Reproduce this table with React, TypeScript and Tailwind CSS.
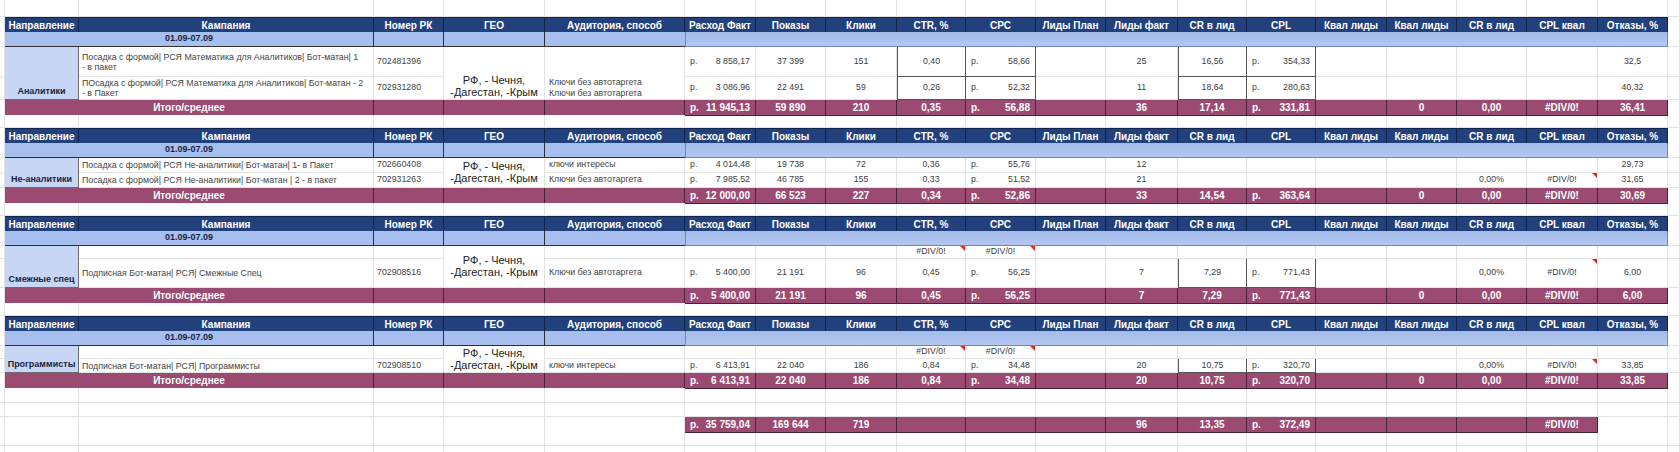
const GRID =
  "grid grid-cols-[5px_74px_295px_70px_101px_140px_71px_70px_71px_69px_70px_70px_72px_69px_69px_71px_70px_70px_71px_70px_12px]";
const LINE = "border-r border-b border-[#e2e2e2] bg-white";

const HEAD = [
  "Направление",
  "Кампания",
  "Номер РК",
  "ГЕО",
  "Аудитория, способ",
  "Расход Факт",
  "Показы",
  "Клики",
  "CTR, %",
  "CPC",
  "Лиды План",
  "Лиды факт",
  "CR в лид",
  "CPL",
  "Квал лиды",
  "Квал лиды",
  "CR в лид",
  "CPL квал",
  "Отказы, %",
];

// money columns inside the 14 metric values: Расход, CPC, CPL
const MONEY = [0, 4, 8];

type DRow = { camp: string[]; num: string; aud: string; vals: string[]; tri?: number[]; dark?: number[] };
type Block = {
  dir: string;
  rows: string;
  geo: string;
  audMerged?: boolean;
  data: DRow[];
  total: string[];
};

const BLOCKS: Block[] = [
  {
    dir: "Аналитики",
    rows: "grid-rows-[30px_23px]",
    geo: "justify-end",
    audMerged: true,
    data: [
      {
        camp: ["Посадка с формой| РСЯ Математика для Аналитиков| Бот-матан| 1", "- в пакет"],
        num: "702481396",
        aud: "Ключи без автотаргета",
        vals: ["8 858,17", "37 399", "151", "0,40", "58,66", "", "25", "16,56", "354,33", "", "", "", "", "32,5"],
        dark: [3, 4, 7, 8],
      },
      {
        camp: ["ПОсадка с формой| РСЯ Математика для Аналитиков| Бот-матан - 2", "- в Пакет"],
        num: "702931280",
        aud: "Ключи без автотаргета",
        vals: ["3 086,96", "22 491", "59", "0,26", "52,32", "", "11", "18,64", "280,63", "", "", "", "", "40,32"],
        dark: [3, 4, 7, 8],
      },
    ],
    total: ["11 945,13", "59 890", "210", "0,35", "56,88", "", "36", "17,14", "331,81", "", "0", "0,00", "#DIV/0!", "36,41"],
  },
  {
    dir: "Не-аналитики",
    rows: "grid-rows-[15px_15px]",
    geo: "justify-center",
    data: [
      {
        camp: ["Посадка с формой| РСЯ Не-аналитики| Бот-матан| 1- в Пакет"],
        num: "702660408",
        aud: "ключи интересы",
        vals: ["4 014,48", "19 738", "72", "0,36", "55,76", "", "12", "", "", "", "", "", "", "29,73"],
      },
      {
        camp: ["Посадка с формой| РСЯ Не-аналитики| Бот-матан | 2 - в пакет"],
        num: "702931263",
        aud: "Ключи без автотаргета",
        vals: ["7 985,52", "46 785", "155", "0,33", "51,52", "", "21", "", "", "", "", "0,00%", "#DIV/0!", "31,65"],
        tri: [12],
      },
    ],
    total: ["12 000,00", "66 523", "227", "0,34", "52,86", "", "33", "14,54", "363,64", "", "0", "0,00", "#DIV/0!", "30,69"],
  },
  {
    dir: "Смежные спец",
    rows: "grid-rows-[13px_29px]",
    geo: "justify-center",
    data: [
      {
        camp: [""],
        num: "",
        aud: "",
        vals: ["", "", "", "#DIV/0!", "#DIV/0!", "", "", "", "", "", "", "", "", ""],
        tri: [3, 4],
      },
      {
        camp: ["Подписная Бот-матан| РСЯ| Смежные Спец"],
        num: "702908516",
        aud: "Ключи без автотаргета",
        vals: ["5 400,00", "21 191", "96", "0,45", "56,25", "", "7", "7,29", "771,43", "", "", "0,00%", "#DIV/0!", "6,00"],
        tri: [12],
        dark: [7, 8],
      },
    ],
    total: ["5 400,00", "21 191", "96", "0,45", "56,25", "", "7", "7,29", "771,43", "", "0", "0,00", "#DIV/0!", "6,00"],
  },
  {
    dir: "Программисты",
    rows: "grid-rows-[13px_14px]",
    geo: "justify-end",
    data: [
      {
        camp: [""],
        num: "",
        aud: "",
        vals: ["", "", "", "#DIV/0!", "#DIV/0!", "", "", "", "", "", "", "", "", ""],
        tri: [3, 4],
      },
      {
        camp: ["Подписная Бот-матан| РСЯ| Программисты"],
        num: "702908510",
        aud: "ключи интересы",
        vals: ["6 413,91", "22 040", "186", "0,84", "34,48", "", "20", "10,75", "320,70", "", "", "0,00%", "#DIV/0!", "33,85"],
        tri: [12],
        dark: [7, 8],
      },
    ],
    total: ["6 413,91", "22 040", "186", "0,84", "34,48", "", "20", "10,75", "320,70", "", "0", "0,00", "#DIV/0!", "33,85"],
  },
];

const GRAND = ["35 759,04", "169 644", "719", "", "", "", "96", "13,35", "372,49", "", "", "", "#DIV/0!"];

const Triangle = () => (
  <span className="absolute right-0 top-0 border-l-[5px] border-t-[5px] border-l-transparent border-t-[#d93025]" />
);

const Metric = ({
  v,
  money,
  total,
  dark,
  darkL,
  tri,
}: {
  v: string;
  money: boolean;
  total?: boolean;
  dark?: boolean;
  darkL?: boolean;
  tri?: boolean;
}) => {
  const isMoney = money && v !== "" && !v.startsWith("#");
  let look = "border-r border-b border-[#e2e2e2] bg-white text-[8.8px] text-[#3d3d3d]";
  if (total) look = "border-r border-b border-[#4a2236] bg-[#9b4b72] text-[10px] font-bold text-white";
  else if (dark) look = `border-r border-b ${darkL ? "border-l" : ""} border-[#555] bg-white text-[8.8px] text-[#3d3d3d]`;
  return (
    <div
      className={`relative flex items-center whitespace-nowrap ${
        isMoney ? "justify-between px-[5px]" : "justify-center"
      } ${look}`}
    >
      {isMoney ? (
        <>
          <span>р.</span>
          <span>{v}</span>
        </>
      ) : (
        v
      )}
      {tri && <Triangle />}
    </div>
  );
};

const Blank = ({ h }: { h: string }) => (
  <div className={`${GRID} ${h}`}>
    {Array.from({ length: 21 }).map((_, i) => (
      <div key={i} className={LINE} />
    ))}
  </div>
);

const HeaderRow = () => (
  <div className={`${GRID} h-[15px]`}>
    <div className={LINE} />
    {HEAD.map((h, i) => (
      <div
        key={i}
        className="flex items-center justify-center whitespace-nowrap border-r border-b border-t border-[#0f2550] bg-[#22407c] text-[10px] font-bold text-white"
      >
        {h}
      </div>
    ))}
    <div className={LINE} />
  </div>
);

const DateRow = () => (
  <div className={`${GRID} h-[15px]`}>
    <div className={LINE} />
    <div className="col-span-2 flex items-center justify-center border-r border-b border-[#2f2f2f] bg-[#a7bfee] text-[9px] font-bold text-[#1b2440]">
      01.09-07.09
    </div>
    <div className="border-r border-b border-[#2f2f2f] bg-[#a7bfee]" />
    <div className="border-r border-b border-[#2f2f2f] bg-[#a7bfee]" />
    <div className="border-b border-[#2f2f2f] bg-[#a7bfee]" />
    <div className="col-span-14 border-l border-r border-b border-[#6f86b8] bg-gradient-to-b from-[#a3bbea] to-[#b3c7f1]" />
    <div className={LINE} />
  </div>
);

const DataRows = ({ b }: { b: Block }) => (
  <div className={`${GRID} ${b.rows}`}>
    {b.data.map((r, ri) => {
      const dark = r.dark ?? [];
      return (
        <div key={ri} className="contents">
          <div className={LINE} />
          {ri === 0 && (
            <div className="row-span-2 flex items-end justify-center whitespace-nowrap border-r border-b border-[#6b6b6b] bg-[#c6d6f4] pb-[1px] text-[9px] font-bold text-[#1b2440]">
              {b.dir}
            </div>
          )}
          <div className="flex flex-col justify-center overflow-hidden whitespace-nowrap border-r border-b border-[#e2e2e2] pl-[3px] text-[8.8px] leading-[10px] text-[#444]">
            {r.camp.map((l, i) => (
              <span key={i}>{l}</span>
            ))}
          </div>
          <div className="flex items-center border-r border-b border-[#e2e2e2] pl-[3px] text-[8.8px] text-[#444]">
            {r.num}
          </div>
          {ri === 0 && (
            <div
              className={`row-span-2 flex flex-col items-center ${b.geo} whitespace-nowrap border-r border-b border-[#e2e2e2] pb-[1px] text-[11px] leading-[12px] text-[#222]`}
            >
              <span>РФ, - Чечня,</span>
              <span>-Дагестан, -Крым</span>
            </div>
          )}
          {b.audMerged ? (
            ri === 0 && (
              <div className="row-span-2 flex flex-col justify-end gap-[1px] whitespace-nowrap border-r border-b border-[#e2e2e2] pb-[1px] pl-[4px] text-[8.8px] leading-[10px] text-[#444]">
                {b.data.map((d, i) => (
                  <span key={i}>{d.aud}</span>
                ))}
              </div>
            )
          ) : (
            <div className="flex items-center whitespace-nowrap border-r border-b border-[#e2e2e2] pl-[4px] text-[8.8px] text-[#444]">
              {r.aud}
            </div>
          )}
          {r.vals.map((v, i) => (
            <Metric
              key={i}
              v={v}
              money={MONEY.includes(i)}
              dark={dark.includes(i)}
              darkL={dark.includes(i) && !dark.includes(i - 1)}
              tri={r.tri?.includes(i)}
            />
          ))}
          <div className={LINE} />
        </div>
      );
    })}
  </div>
);

const TotalRow = ({ vals }: { vals: string[] }) => (
  <div className={`${GRID} h-[15px]`}>
    <div className={LINE} />
    <div className="col-span-2 flex items-center justify-center border-r border-b border-[#4a2236] bg-[#9b4b72] text-[10px] font-bold text-white">
      Итого/среднее
    </div>
    <div className="border-r border-b border-[#4a2236] bg-[#9b4b72]" />
    <div className="border-r border-b border-[#4a2236] bg-[#9b4b72]" />
    <div className="border-r border-b border-[#4a2236] bg-[#9b4b72]" />
    {vals.map((v, i) => (
      <Metric key={i} v={v} money={MONEY.includes(i)} total />
    ))}
    <div className={LINE} />
  </div>
);

const GrandRow = () => (
  <div className={`${GRID} h-[15px]`}>
    {Array.from({ length: 6 }).map((_, i) => (
      <div key={i} className={LINE} />
    ))}
    {GRAND.map((v, i) => (
      <Metric key={i} v={v} money={MONEY.includes(i)} total />
    ))}
    <div className={LINE} />
    <div className={LINE} />
  </div>
);

export default function App() {
  return (
    <div className="h-[452px] w-[1680px] overflow-hidden bg-white font-['Liberation_Sans',Arial,sans-serif]">
      <Blank h="h-[17px]" />
      {BLOCKS.map((b, i) => (
        <div key={i}>
          {i > 0 && <Blank h="h-[13px]" />}
          <HeaderRow />
          <DateRow />
          <DataRows b={b} />
          <TotalRow vals={b.total} />
        </div>
      ))}
      <Blank h="h-[15px]" />
      <Blank h="h-[14px]" />
      <GrandRow />
      <Blank h="h-[14px]" />
      <Blank h="h-[14px]" />
    </div>
  );
}
